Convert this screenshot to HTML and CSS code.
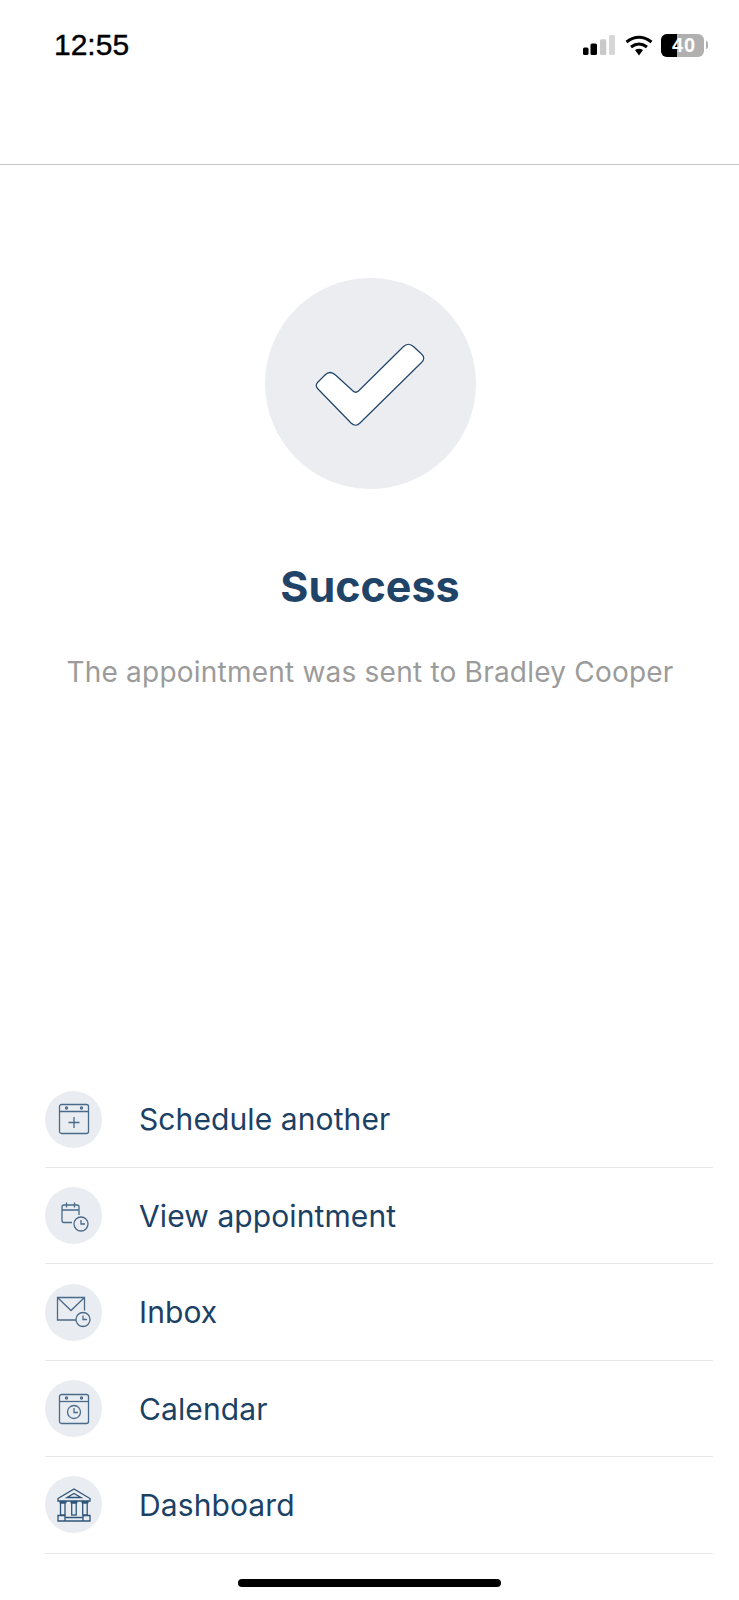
FILE: index.html
```html
<!DOCTYPE html>
<html lang="en">
<head>
<meta charset="utf-8">
<title>Success</title>
<link rel="stylesheet" href="styles.css">
</head>
<body>
<div class="app">
  <header class="top">
    <div class="status">
      <span class="time">12:55</span>
      <div class="status-icons">
        <svg class="signal" width="32" height="20" viewBox="0 0 32 20"><rect x="0" y="12.500" width="5.500" height="7.500" rx="1.500" fill="#000"/><rect x="7.500" y="8.500" width="6.500" height="11.500" rx="1.500" fill="#000"/><rect x="17" y="4.300" width="6.300" height="15.700" rx="1.500" fill="#c9c9c9"/><rect x="26" y="0" width="6" height="20" rx="1.500" fill="#d6d6d6"/></svg>
        <svg class="wifi" width="28" height="21" viewBox="0 0 28 21"><path d="M1.500 7Q14 -2.500 26.500 7M6 12Q14 6 22 12" fill="none" stroke="#000" stroke-width="3"/><path d="M10 15Q14 12.500 18 15L14 20.500Z" fill="#000"/></svg>
        <div class="battery"><span class="battery-level"></span><span class="battery-text">40</span></div>
        <span class="battery-cap"></span>
      </div>
    </div>
  </header>
  <main class="result">
    <div class="success-circle">
      <svg width="211" height="211" viewBox="0 0 211 211"><path d="M53 111Q49.500 107.500 53 104L60 97Q65 92 70.500 97L88 113Q90.700 115.500 93.500 113L138 69Q143.300 63.500 149 69L156.500 76Q161 80 156.500 84.500L95 145Q90.700 149.500 86 145Z" fill="#fff" stroke="#1f4468" stroke-width="1.200"/></svg>
    </div>
    <h1 class="title">Success</h1>
    <p class="subtitle">The appointment was sent to Bradley Cooper</p>
  </main>
  <ul class="actions">
    <li class="action">
      <span class="action-icon"><svg width="32" height="32" viewBox="0 0 32 32" class="glyph"><rect x="1.500" y="1.500" width="29" height="29" rx="2"/><path d="M1.500 8.500h29M16 14v11M10.500 19.500h11"/><circle cx="8.500" cy="5" r="1"/><circle cx="23.500" cy="5" r="1"/></svg></span>
      <span class="action-label">Schedule another</span>
    </li>
    <li class="action">
      <span class="action-icon"><svg width="32" height="32" viewBox="0 0 32 32" class="glyph"><path d="M14 22.500H6a2 2 0 0 1-2-2V7a2 2 0 0 1 2-2h13a2 2 0 0 1 2 2v8M4 10h17M8.500 2.500v5M16.500 2.500v5"/><circle cx="23" cy="24" r="7"/><path d="M23 20v4h4"/></svg></span>
      <span class="action-label">View appointment</span>
    </li>
    <li class="action">
      <span class="action-icon"><svg width="36" height="32" viewBox="0 0 36 32" class="glyph"><path d="M20 24H1.500V1.500h27v13M1.500 1.500l13.500 13L28.500 1.500"/><circle cx="27" cy="23.500" r="7"/><path d="M27 19.500v4h4"/></svg></span>
      <span class="action-label">Inbox</span>
    </li>
    <li class="action">
      <span class="action-icon"><svg width="32" height="32" viewBox="0 0 32 32" class="glyph"><rect x="1.500" y="1.500" width="29" height="29" rx="2"/><path d="M1.500 8.500h29"/><circle cx="8.500" cy="5" r="1"/><circle cx="23.500" cy="5" r="1"/><circle cx="16" cy="19" r="6.500"/><path d="M16 15v4.500h4"/></svg></span>
      <span class="action-label">Calendar</span>
    </li>
    <li class="action">
      <span class="action-icon"><svg width="34" height="34" viewBox="0 0 34 34" class="glyph glyph-bank"><path d="M1 10.500L17 1l16 9.500V13H1zM10 9.500l7-4 7 4zM2.500 14.500h7M13.500 14.500h7M24.500 14.500h7"/><rect x="3.500" y="15" width="4.500" height="12"/><rect x="14.700" y="15" width="4.500" height="12"/><rect x="25.700" y="15" width="4.500" height="12"/><path d="M1 27.500h7v5.500H1zM26 27.500h7V33h-7zM8 29.500h18M8 33h18"/></svg></span>
      <span class="action-label">Dashboard</span>
    </li>
  </ul>
</div>
<div class="home-indicator"></div>
</body>
</html>
```
FILE: styles.css
```css
* { box-sizing: border-box; }
html, body { margin: 0; padding: 0; }
body { background: #fff; font-family: Inter, "Liberation Sans", sans-serif; width: 739px; height: 1600px; overflow: hidden; position: relative; }
.app { display: flex; flex-direction: column; height: 1600px; }
.top { height: 165px; border-bottom: 1px solid #c6c6c8; flex: none; }
.status { display: flex; justify-content: space-between; align-items: center; padding: 28px 31px 0 54px; }
.time { font-family: "Liberation Sans", sans-serif; font-size: 30px; font-weight: 400; line-height: 34px; color: #000; -webkit-text-stroke: 0.4px #000; }
.status-icons { display: flex; align-items: center; }
.signal { margin-right: 10px; }
.wifi { margin-right: 8px; }
.battery { width: 43px; height: 23px; border-radius: 6px; background: #b0b0b0; position: relative; display: flex; align-items: center; justify-content: center; padding-left: 3px; }
.battery-level { position: absolute; left: 0; top: 0; bottom: 0; width: 16px; background: #000; border-radius: 6px 0 0 6px; }
.battery-text { position: relative; color: #fff; font-size: 20px; line-height: 23px; letter-spacing: 1px; font-weight: 700; font-family: "Liberation Sans", sans-serif; }
.battery-cap { width: 2px; height: 8px; background: #b0b0b0; border-radius: 0 3px 3px 0; margin-left: 2px; }
.result { flex: 1; display: flex; flex-direction: column; align-items: center; padding-top: 113px; padding-left: 1px; }
.success-circle { width: 211px; height: 211px; border-radius: 50%; background: #ebedf1; }
.success-circle svg { display: block; }
.title { margin: 67px 0 0; font-size: 43px; line-height: 60px; font-weight: 700; color: #1f4468; }
.subtitle { margin: 36px 0 0; font-size: 28px; line-height: 40px; color: #9b9b9b; font-weight: 400; letter-spacing: 0.22px; }
.actions { list-style: none; margin: 0; padding: 0 26px 46.400px 45px; flex: none; }
.action { height: 96.400px; display: flex; align-items: center; gap: 37px; border-bottom: 1px solid #e5e7e8; }
.action-icon { width: 57px; height: 57px; border-radius: 50%; background: #e9edf2; display: flex; align-items: center; justify-content: center; flex: none; }
.action-label { font-size: 30px; color: #1b4165; letter-spacing: 0.1px; }
.glyph { fill: none; stroke: #4a6a8a; stroke-width: 1.300; }
.glyph-bank { stroke: #2f5478; stroke-width: 1.300; }
.home-indicator { position: absolute; left: 238px; top: 1579px; width: 263px; height: 8px; border-radius: 4px; background: #000; }
```
